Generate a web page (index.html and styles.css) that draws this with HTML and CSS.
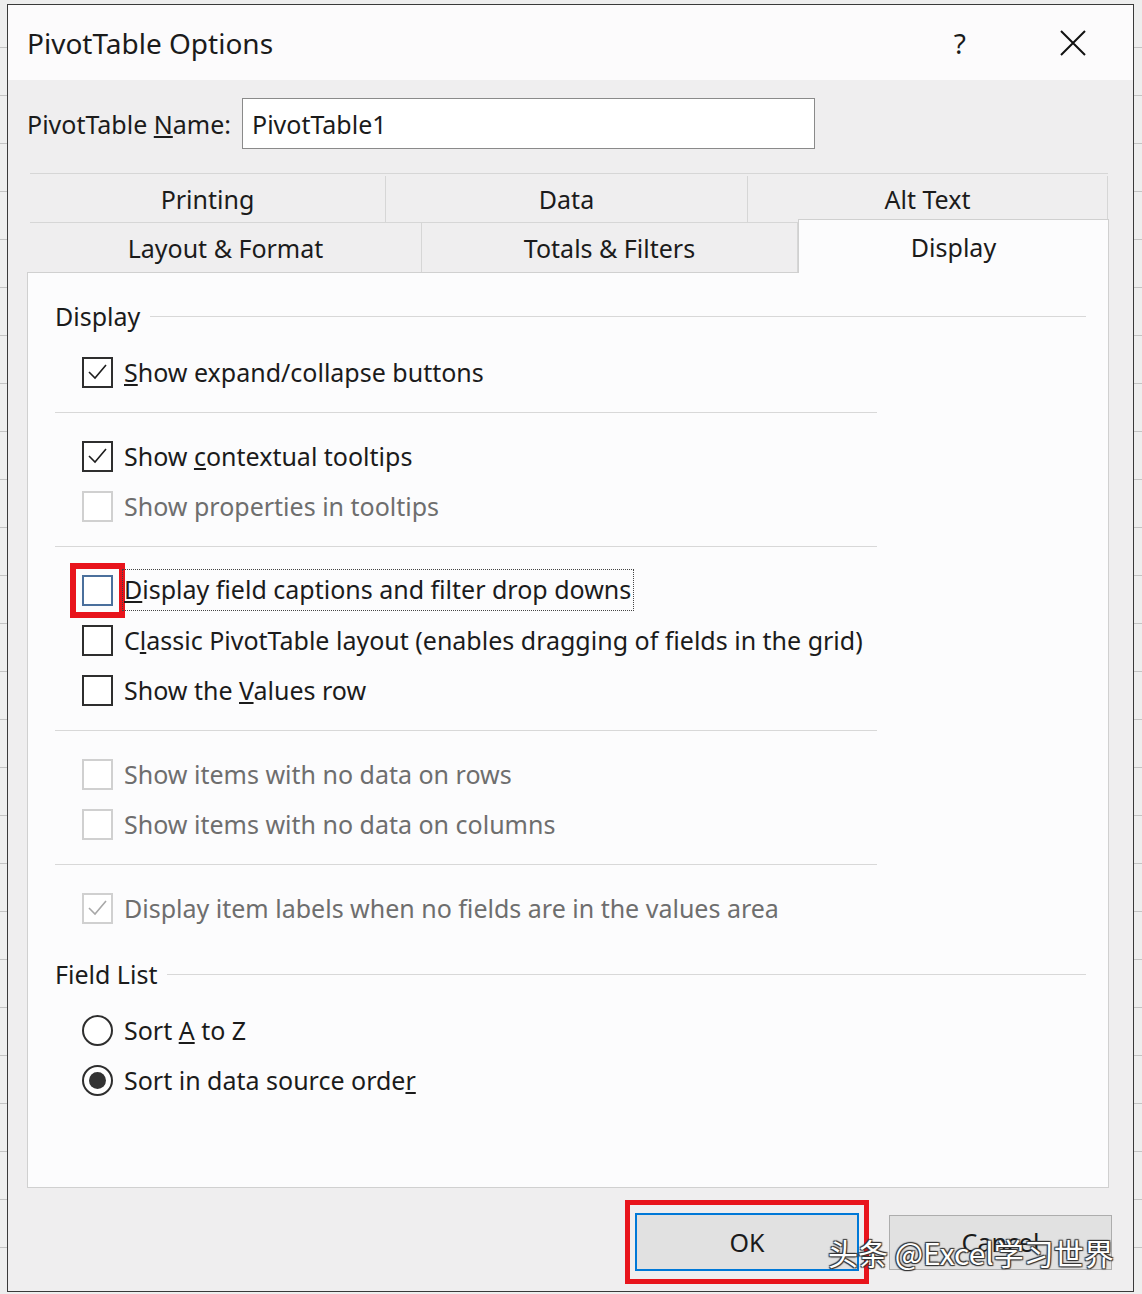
FILE: index.html
```html
<!DOCTYPE html>
<html lang="en">
<head>
  <meta charset="UTF-8" />
  <title>PivotTable Options</title>
  <link rel="stylesheet" href="styles.css">
</head>
<body>
  <div class="dialog">
    <div class="titlebar">
      <span class="title">PivotTable Options</span>
      <span class="help">?</span>
      <svg class="close" width="26" height="26" viewBox="0 0 26 26">
        <path d="M1 1 L25 25 M25 1 L1 25" stroke="#111" stroke-width="2" fill="none" />
      </svg>
    </div>

    <div class="content">
      <div class="name-row">
        <span>PivotTable <u>N</u>ame:</span>
        <div class="name-input">PivotTable1</div>
      </div>

      <div class="tabs">
        <div class="tab-row top">
          <div class="tab">Printing</div>
          <div class="tab">Data</div>
          <div class="tab">Alt Text</div>
        </div>
        <div class="tab-row bottom">
          <div class="tab">Layout &amp; Format</div>
          <div class="tab">Totals &amp; Filters</div>
          <div class="tab active">Display</div>
        </div>
      </div>

      <div class="panel">
        <div class="group-head">Display</div>

        <div class="opt"><span class="box"><svg viewBox="0 0 27 27"><polyline points="5,13 11,19 22,6" /></svg></span><span><u>S</u>how expand/collapse buttons</span></div>
        <div class="sep"></div>

        <div class="opt"><span class="box"><svg viewBox="0 0 27 27"><polyline points="5,13 11,19 22,6" /></svg></span><span>Show <u>c</u>ontextual tooltips</span></div>
        <div class="opt off"><span class="box"></span><span>Show properties in tooltips</span></div>
        <div class="sep"></div>

        <div class="opt"><span class="box focus"></span><span class="focus-text"><u>D</u>isplay field captions and filter drop downs</span></div>
        <div class="opt"><span class="box"></span><span>C<u>l</u>assic PivotTable layout (enables dragging of fields in the grid)</span></div>
        <div class="opt"><span class="box"></span><span>Show the <u>V</u>alues row</span></div>
        <div class="sep"></div>

        <div class="opt off"><span class="box"></span><span>Show items with no data on rows</span></div>
        <div class="opt off"><span class="box"></span><span>Show items with no data on columns</span></div>
        <div class="sep"></div>

        <div class="opt off"><span class="box"><svg viewBox="0 0 27 27"><polyline points="5,13 11,19 22,6" /></svg></span><span>Display item labels when no fields are in the values area</span></div>

        <div class="group-head spaced">Field List</div>

        <div class="opt"><span class="radio"></span><span>Sort <u>A</u> to Z</span></div>
        <div class="opt"><span class="radio checked"></span><span>Sort in data source orde<u>r</u></span></div>
      </div>

      <div class="buttons">
        <div class="btn ok">OK</div>
        <div class="btn">Cancel</div>
      </div>
    </div>

    <div class="watermark">头条 @Excel学习世界</div>
  </div>
</body>
</html>
```

FILE: styles.css
```css
body {
  margin: 0;
  height: 1294px;
  overflow: hidden;
  background-color: #eeeeee;
  background-image: repeating-linear-gradient(to bottom, transparent 0 47px, #c4c4c4 47px 48px);
  font-family: "Noto Sans", "Open Sans", sans-serif;
  color: #1b1b1b;
}

.dialog {
  position: relative;
  box-sizing: border-box;
  width: 1127px;
  height: 1288px;
  margin: 4px 0 0 7px;
  border: 1px solid #3a3a3a;
  background-color: #efeeef;
  display: flex;
  flex-direction: column;
}

.titlebar {
  height: 75px;
  flex-shrink: 0;
  background-color: #fcfbfc;
  display: flex;
  align-items: center;
  padding-left: 19px;
}

.title {
  flex: 1;
  font-size: 28px;
}

.help {
  font-size: 28px;
  margin-right: 94px;
}

.close {
  margin-right: 47px;
}

.content {
  padding: 18px 24px 0 19px;
}

.name-row {
  display: flex;
  align-items: center;
  gap: 11px;
  font-size: 25px;
}

.name-input {
  box-sizing: border-box;
  width: 573px;
  height: 51px;
  padding-left: 9px;
  border: 1px solid #8a8a8a;
  background-color: #fff;
  display: flex;
  align-items: center;
}

.tabs {
  margin: 24px 0 0 3px;
}

.tab-row {
  box-sizing: border-box;
  display: grid;
  font-size: 25px;
}

.tab-row.top {
  grid-template-columns: 356px 362px 1fr;
  height: 49px;
  padding-top: 2px;
  border-top: 1px solid #d6d6d6;
  margin-right: 1px;
}

.tab-row.bottom {
  grid-template-columns: 392px 376px 1fr;
  height: 50px;
  border-top: 1px solid #d6d6d6;
}

.tab {
  display: flex;
  align-items: center;
  justify-content: center;
  border-right: 1px solid #d6d6d6;
}

.tab.active {
  position: relative;
  z-index: 1;
  margin: -4px 0 -1px 0;
  background-color: #fcfcfd;
  border: 1px solid #d0d0d0;
  border-bottom: none;
}

.panel {
  border: 1px solid #d0d0d0;
  background-color: #fcfcfd;
  padding: 26px 22px 82px 27px;
  font-size: 25px;
}

.group-head {
  display: flex;
  align-items: center;
  gap: 10px;
  height: 34px;
  margin-bottom: 14px;
}

.group-head::after {
  content: "";
  flex: 1;
  height: 1px;
  background-color: #d8d8d8;
}

.group-head.spaced {
  margin-top: 24px;
}

.opt {
  display: flex;
  align-items: center;
  height: 50px;
  padding-left: 27px;
  white-space: nowrap;
}

.opt.off {
  color: #6e6e6e;
}

.box {
  box-sizing: border-box;
  width: 31px;
  height: 31px;
  margin-right: 11px;
  border: 2px solid #2e2e2e;
  background-color: #fff;
  flex-shrink: 0;
}

.box svg {
  display: block;
  width: 27px;
  height: 27px;
}

.box polyline {
  fill: none;
  stroke: #1e1e1e;
  stroke-width: 1.6;
}

.opt.off .box {
  border-color: #d0d0d0;
}

.opt.off .box polyline {
  stroke: #a8a8a8;
}

.box.focus {
  border-color: #4a6f9c;
  outline: 6px solid #e8141c;
  outline-offset: 6px;
}

.focus-text {
  margin-left: -1px;
  padding: 2px 2px 4px 1px;
  outline: 1px dotted #444;
}

.radio {
  box-sizing: border-box;
  width: 31px;
  height: 31px;
  margin-right: 11px;
  border: 2px solid #2e2e2e;
  border-radius: 50%;
  background-color: #fff;
  display: flex;
  align-items: center;
  justify-content: center;
}

.radio.checked::after {
  content: "";
  width: 17px;
  height: 17px;
  border-radius: 50%;
  background-color: #333;
}

.sep {
  width: 822px;
  height: 1px;
  margin: 15px 0 18px;
  background-color: #d8d8d8;
}

.buttons {
  display: flex;
  justify-content: flex-end;
  align-items: center;
  gap: 30px;
  margin: 25px -3px 0 0;
}

.btn {
  box-sizing: border-box;
  width: 223px;
  height: 55px;
  border: 1px solid #adadad;
  background-color: #e1e1e1;
  display: flex;
  align-items: center;
  justify-content: center;
  font-size: 25px;
}

.btn.ok {
  position: relative;
  width: 224px;
  height: 58px;
  border: 2px solid #0078d7;
}

.btn.ok::after {
  content: "";
  position: absolute;
  top: -15px;
  bottom: -15px;
  left: -12px;
  right: -12px;
  border: 5px solid #e8141c;
}

.watermark {
  position: absolute;
  left: 820px;
  top: 1225px;
  font-family: "Noto Sans CJK SC", "Noto Sans", sans-serif;
  font-size: 30px;
  color: #fff;
  text-shadow: 1px 1px 1px #333, -1px -1px 1px #333, 1px -1px 1px #333, -1px 1px 1px #333;
}
```
